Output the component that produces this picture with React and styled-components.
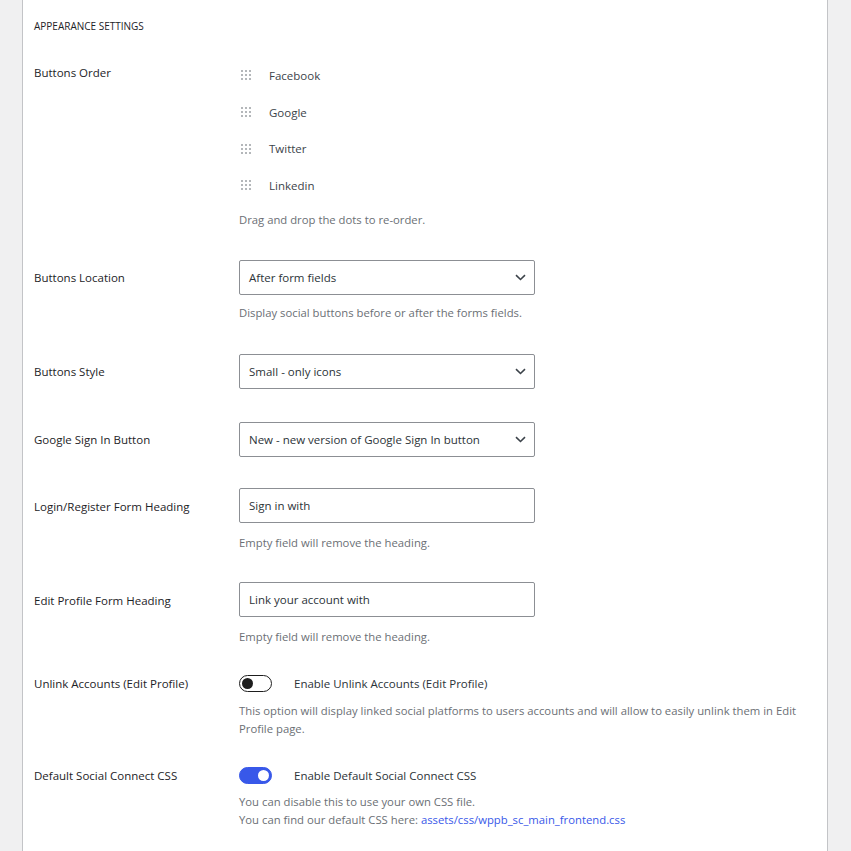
import React from "react";
import styled, { createGlobalStyle } from "styled-components";

const GlobalStyle = createGlobalStyle`
  html, body {
    margin: 0;
    padding: 0;
    background: #f0f0f1;
  }
  body {
    font-family: "Open Sans", "Noto Sans", sans-serif;
    color: #1d2327;
  }
`;

const Page = styled.div`
  height: 851px;
  overflow: hidden;
  padding: 0 23px 0 22px;
`;

const Panel = styled.div`
  background: #fff;
  border-left: 1px solid #c3c4c7;
  border-right: 1px solid #c3c4c7;
  min-height: 851px;
  padding: 18px 12px 0 11px;
  box-sizing: border-box;
`;

const Heading = styled.h2`
  margin: 0;
  font-size: 10px;
  line-height: 16px;
  font-weight: 500;
  text-transform: uppercase;
  color: #1d2327;
`;

const Row = styled.div`
  display: grid;
  grid-template-columns: 205px 1fr;
  margin-top: ${(p) => p.$top}px;
`;

const Label = styled.div`
  font-size: 11.5px;
  font-weight: 500;
  line-height: 18px;
  color: #1d2327;
  padding-top: ${(p) => p.$pad || 0}px;
`;

const Field = styled.div`
  display: flex;
  flex-direction: column;
  align-items: flex-start;
`;

const OrderList = styled.ul`
  list-style: none;
  margin: 0;
  padding: 0;
`;

const OrderItem = styled.li`
  display: flex;
  align-items: center;
  height: 36.7px;
  font-size: 11.5px;
  color: #3c434a;
`;

const Dots = styled.span`
  display: grid;
  grid-template-columns: repeat(3, 2px);
  grid-auto-rows: 2px;
  gap: 2px;
  margin: 0 18px 0 2px;
  span {
    background: #b4b7ba;
  }
`;

const Hint = styled.p`
  margin: ${(p) => p.$top ?? 9}px 0 0;
  font-size: 11.3px;
  line-height: 18px;
  color: #6b6f75;
`;

const SelectBox = styled.div`
  position: relative;
  width: 296px;
  height: 35px;
  box-sizing: border-box;
  border: 1px solid #8c8f94;
  border-radius: 2px;
  display: flex;
  align-items: center;
  padding: 0 9px;
  font-size: 11.5px;
  color: #2c3338;
  svg {
    position: absolute;
    right: 8px;
    top: 13px;
  }
`;

const TextInput = styled.input`
  width: 296px;
  height: 35px;
  box-sizing: border-box;
  border: 1px solid #8c8f94;
  border-radius: 2px;
  padding: 0 9px;
  font-family: inherit;
  font-size: 11.5px;
  color: #2c3338;
  background: #fff;
  outline: none;
`;

const ToggleLine = styled.label`
  display: flex;
  align-items: center;
  height: 18px;
  gap: 22px;
  font-size: 11.5px;
  color: #2c3338;
`;

const Switch = styled.span`
  position: relative;
  width: 33px;
  height: 17px;
  box-sizing: border-box;
  border-radius: 9px;
  border: 1.5px solid ${(p) => (p.$on ? "#3858e9" : "#1e1e1e")};
  background: ${(p) => (p.$on ? "#3858e9" : "#fff")};
  flex-shrink: 0;
  &::after {
    content: "";
    position: absolute;
    top: 1.5px;
    left: ${(p) => (p.$on ? "17.5px" : "1.5px")};
    width: 11px;
    height: 11px;
    border-radius: 50%;
    background: ${(p) => (p.$on ? "#fff" : "#1e1e1e")};
  }
`;

const Link = styled.a`
  color: #3858e9;
  text-decoration: none;
`;

const Chevron = () => (
  <svg width="11" height="7" viewBox="0 0 11 7" fill="none">
    <path d="M1 1.2l4.5 4.3L10 1.2" stroke="#3c434a" strokeWidth="1.6" />
  </svg>
);

const Grip = () => (
  <Dots>
    {Array.from({ length: 9 }).map((_, i) => (
      <span key={i} />
    ))}
  </Dots>
);

const Select = ({ value }) => (
  <SelectBox>
    {value}
    <Chevron />
  </SelectBox>
);

export default function App() {
  return (
    <>
      <GlobalStyle />
      <Page>
        <Panel>
          <Heading>Appearance Settings</Heading>

          <Row $top={23}>
            <Label $pad={7}>Buttons Order</Label>
            <Field>
              <OrderList>
                {["Facebook", "Google", "Twitter", "Linkedin"].map((n) => (
                  <OrderItem key={n}>
                    <Grip />
                    {n}
                  </OrderItem>
                ))}
              </OrderList>
              <Hint $top={7}>Drag and drop the dots to re-order.</Hint>
            </Field>
          </Row>

          <Row $top={31}>
            <Label $pad={9}>Buttons Location</Label>
            <Field>
              <Select value="After form fields" />
              <Hint>Display social buttons before or after the forms fields.</Hint>
            </Field>
          </Row>

          <Row $top={32}>
            <Label $pad={9}>Buttons Style</Label>
            <Field>
              <Select value="Small - only icons" />
            </Field>
          </Row>

          <Row $top={33}>
            <Label $pad={9}>Google Sign In Button</Label>
            <Field>
              <Select value="New - new version of Google Sign In button" />
            </Field>
          </Row>

          <Row $top={31}>
            <Label $pad={10}>Login/Register Form Heading</Label>
            <Field>
              <TextInput defaultValue="Sign in with" />
              <Hint $top={11}>Empty field will remove the heading.</Hint>
            </Field>
          </Row>

          <Row $top={30}>
            <Label $pad={10}>Edit Profile Form Heading</Label>
            <Field>
              <TextInput defaultValue="Link your account with" />
              <Hint $top={11}>Empty field will remove the heading.</Hint>
            </Field>
          </Row>

          <Row $top={29}>
            <Label>Unlink Accounts (Edit Profile)</Label>
            <Field>
              <ToggleLine>
                <Switch />
                Enable Unlink Accounts (Edit Profile)
              </ToggleLine>
              <Hint $top={9}>
                This option will display linked social platforms to users accounts and will allow to easily unlink them in Edit Profile page.
              </Hint>
            </Field>
          </Row>

          <Row $top={29}>
            <Label>Default Social Connect CSS</Label>
            <Field>
              <ToggleLine>
                <Switch $on />
                Enable Default Social Connect CSS
              </ToggleLine>
              <Hint $top={8}>
                You can disable this to use your own CSS file.
                <br />
                You can find our default CSS here:{" "}
                <Link href="#">assets/css/wppb_sc_main_frontend.css</Link>
              </Hint>
            </Field>
          </Row>
        </Panel>
      </Page>
    </>
  );
}
